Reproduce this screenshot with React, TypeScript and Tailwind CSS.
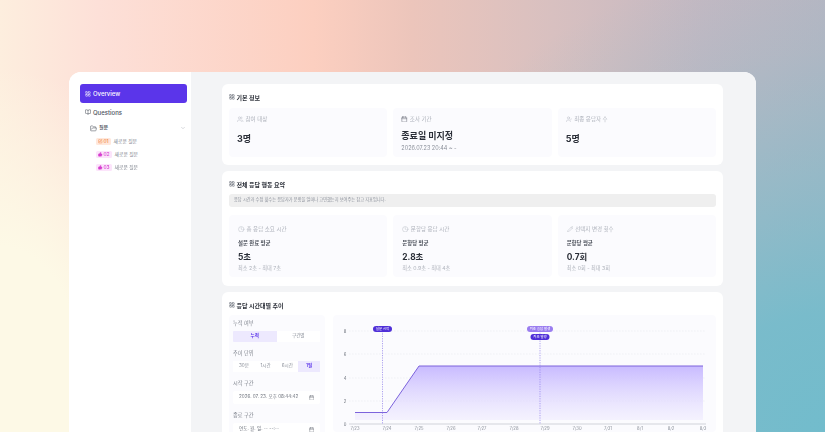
import { BookOpen, Calendar, ChevronDown, Clock, FolderOpen, LayoutGrid, Pencil, SquarePen, ThumbsUp, UserCheck, Users } from "lucide-react";
import type { ReactNode } from "react";

const font = "font-['Inter','Noto_Sans_CJK_KR',sans-serif]";

function Title({ children }: { children: ReactNode }) {
  return (
    <div className="flex h-[10px] items-center gap-[1.5px] text-[6px] font-bold text-[#2b2f38]">
      <LayoutGrid className="h-[6px] w-[6px] text-[#555b66]" strokeWidth={2} />
      {children}
    </div>
  );
}

function Label({ icon, children }: { icon: ReactNode; children: ReactNode }) {
  return (
    <div className="flex h-[8px] items-center gap-[2px] text-[5.5px] text-[#aeb2bb]">
      {icon}
      {children}
    </div>
  );
}

function Stat({ icon, label, sub, value, range }: { icon: ReactNode; label: string; sub: string; value: string; range: string }) {
  return (
    <div className="flex-1 rounded-[4px] bg-[#fbfbfe] pl-[9px] pt-[10px]">
      <Label icon={icon}>{label}</Label>
      <div className="mt-[6px] text-[5.4px] font-semibold leading-[9px] text-[#4a4f59]">{sub}</div>
      <div className="mt-[3px] text-[8.4px] font-bold leading-[13px] text-[#2b2f38]">{value}</div>
      <div className="mt-[1px] text-[5.2px] leading-[7px] text-[#aeb2bb]">{range}</div>
    </div>
  );
}

function NavQuestion({ num, orange }: { num: string; orange?: boolean }) {
  return (
    <div className="flex h-[13px] items-center gap-[3px] pl-[16px]">
      <span className={orange ? "flex h-[7px] items-center gap-[1px] rounded-[1.5px] bg-[#ffe8dc] px-[2px] text-[4.8px] font-medium text-[#f08a4b]" : "flex h-[7px] items-center gap-[1px] rounded-[1.5px] bg-[#fce4fb] px-[2px] text-[4.8px] font-medium text-[#d63fd0]"}>
        {orange ? <SquarePen className="h-[4.5px] w-[4.5px]" strokeWidth={2.5} /> : <ThumbsUp className="h-[4.5px] w-[4.5px]" fill="currentColor" strokeWidth={2} />}
        {num}
      </span>
      <span className="text-[4.8px] text-[#7d828c]">새로운 질문</span>
    </div>
  );
}

function FieldLabel({ children }: { children: ReactNode }) {
  return <div className="text-[5.2px] leading-[8px] text-[#7d828c]">{children}</div>;
}

function DateField({ value }: { value: string }) {
  return (
    <div className="mt-[4px] flex h-[13px] items-center justify-between rounded-[2px] bg-white pl-[6px] pr-[6px] text-[4.6px] text-[#6d727c]">
      <span>{value}</span>
      <Calendar className="h-[5.5px] w-[5.5px]" strokeWidth={2} />
    </div>
  );
}

function Chart() {
  const xs = [355, 387, 419, 451, 482, 514, 545, 577, 608, 640, 671, 703];
  const labels = ["7/23", "7/24", "7/25", "7/26", "7/27", "7/28", "7/29", "7/30", "7/31", "8/1", "8/2", "8/3"];
  const ys: [string, number][] = [["8", 331], ["6", 354], ["4", 378], ["2", 401], ["0", 424]];
  return (
    <svg viewBox="333 315 383 117" className="h-[117px] w-[383px]" fontSize="4.2">
      <defs>
        <linearGradient id="area" x1="0" y1="0" x2="0" y2="1">
          <stop offset="0" stopColor="#c8baff" />
          <stop offset="1" stopColor="#ede9fe" stopOpacity="0.5" />
        </linearGradient>
      </defs>
      {ys.map(([t, y]) => (
        <g key={t}>
          <line x1="349" x2="706" y1={y} y2={y} stroke={t === "0" ? "#dfe1e6" : "#eceef2"} strokeWidth={t === "0" ? 1.4 : 0.7} strokeDasharray={t === "0" ? undefined : "1.5 1.5"} />
          <text x="345" y={y + 1.5} fill="#6d727c" textAnchor="middle">{t}</text>
        </g>
      ))}
      <path d="M355 412.5H387L419 366H703V420H355Z" fill="url(#area)" />
      <path d="M355 412.5H387L419 366H703" fill="none" stroke="#7c63dc" strokeWidth="1" />
      <line x1="382.5" x2="382.5" y1="331" y2="424" stroke="#8d7bea" strokeWidth="0.7" strokeDasharray="1.2 1.2" />
      <line x1="540" x2="540" y1="331" y2="424" stroke="#8d7bea" strokeWidth="0.7" strokeDasharray="1.2 1.2" />
      <rect x="373" y="326" width="19" height="6" rx="3" fill="#4f2fd8" />
      <text x="382.5" y="330.3" fill="#fff" fontSize="3.4" textAnchor="middle">설문 시작</text>
      <rect x="527" y="326" width="26" height="6" rx="3" fill="#9a7df0" />
      <text x="540" y="330.3" fill="#fff" fontSize="3.4" textAnchor="middle">최초 응답 발생</text>
      <rect x="530.5" y="334" width="19" height="6" rx="3" fill="#4f2fd8" />
      <text x="540" y="338.3" fill="#fff" fontSize="3.4" textAnchor="middle">최초 발생</text>
      {xs.map((x, i) => (
        <text key={x} x={x} y="429.5" fill="#8b909a" textAnchor="middle">{labels[i]}</text>
      ))}
    </svg>
  );
}

export default function App() {
  const icon = "h-[6px] w-[6px]";
  return (
    <div className={`${font} h-[432px] w-[825px] overflow-hidden bg-[radial-gradient(ellipse_495px_475px_at_100%_100%,#72bccc_0%,rgba(114,188,204,0.9)_25%,rgba(114,188,204,0.55)_50%,rgba(114,188,204,0.15)_80%,rgba(114,188,204,0)_100%),radial-gradient(ellipse_200px_300px_at_0%_85%,#fdf9e6_40%,rgba(253,249,230,0)_100%),linear-gradient(90deg,#fdeede_0%,#fde0d8_12%,#fccfc0_38%,#ecc5bb_50%,#d8c0c0_67%,#c4b8c2_85%,#b8b6c2_100%)] pl-[69px] pr-[69px] pt-[72px]`}>
      <div className="flex h-[360px] overflow-hidden rounded-t-[12px] bg-white blur-[0.3px]">
        <aside className="w-[122px] shrink-0 bg-white pl-[11px] pr-[4px] pt-[12px]">
          <div className="flex h-[19px] items-center gap-[2px] rounded-[3px] bg-[#5b35ea] pl-[5px] text-[6px] font-medium text-white">
            <LayoutGrid className={icon} strokeWidth={2} />
            Overview
          </div>
          <div className="flex h-[18px] items-center gap-[2px] pl-[5px] text-[6px] font-medium text-[#4b505a]">
            <BookOpen className={icon} strokeWidth={2} />
            Questions
          </div>
          <div className="flex h-[14px] items-center justify-between pl-[10px] pr-[1px] text-[5px] font-medium text-[#4b505a]">
            <span className="flex items-center gap-[2px]">
              <FolderOpen className="h-[7px] w-[7px]" strokeWidth={1.8} />
              질문
            </span>
            <ChevronDown className="h-[6px] w-[6px] text-[#b3b7be]" strokeWidth={2} />
          </div>
          <NavQuestion num="01" orange />
          <NavQuestion num="02" />
          <NavQuestion num="03" />
        </aside>
        <main className="flex flex-1 flex-col gap-[6px] bg-[#f3f4f6] pl-[31px] pr-[34px] pt-[12px]">
          <section className="h-[81px] shrink-0 rounded-[6px] bg-white px-[7px] pt-[8px]">
            <Title>기본 정보</Title>
            <div className="mt-[6px] flex gap-[6px]">
              <div className="h-[49px] flex-1 rounded-[4px] bg-[#fbfbfe] pl-[8px] pt-[7px]">
                <Label icon={<Users className="h-[6.5px] w-[6.5px]" strokeWidth={1.5} />}>참여 대상</Label>
                <div className="mt-[9px] text-[9px] font-bold leading-[14px] text-[#2b2f38]">3명</div>
              </div>
              <div className="h-[49px] flex-1 rounded-[4px] bg-[#fbfbfe] pl-[8px] pt-[7px]">
                <Label icon={<Calendar className="h-[6.5px] w-[6.5px] text-[#6d727c]" strokeWidth={2} />}>조사 기간</Label>
                <div className="mt-[6px] text-[9px] font-bold leading-[14px] text-[#2b2f38]">종료일 미지정</div>
                <div className="mt-[1px] text-[5.5px] leading-[8px] text-[#8b909a]">2026.07.23 20:44 ~ -</div>
              </div>
              <div className="h-[49px] flex-1 rounded-[4px] bg-[#fbfbfe] pl-[8px] pt-[7px]">
                <Label icon={<UserCheck className="h-[6.5px] w-[6.5px]" strokeWidth={1.5} />}>최종 응답자 수</Label>
                <div className="mt-[9px] text-[9px] font-bold leading-[14px] text-[#2b2f38]">5명</div>
              </div>
            </div>
          </section>
          <section className="h-[115px] shrink-0 rounded-[6px] bg-white px-[7px] pt-[8px]">
            <Title>전체 응답 행동 요약</Title>
            <div className="mt-[5px] flex h-[13px] items-center rounded-[3px] bg-[#efefef] pl-[5px] text-[4.2px] text-[#8b909a]">
              응답 시간과 수정 횟수는 응답자가 문항을 얼마나 고민했는지 보여주는 참고 지표입니다.
            </div>
            <div className="mt-[8px] flex h-[62px] gap-[6px]">
              <Stat icon={<Clock className="h-[6.5px] w-[6.5px]" strokeWidth={1.5} />} label="총 응답 소요 시간" sub="설문 완료 평균" value="5초" range="최소 2초 - 최대 7초" />
              <Stat icon={<Clock className="h-[6.5px] w-[6.5px]" strokeWidth={1.5} />} label="문항당 응답 시간" sub="문항당 평균" value="2.8초" range="최소 0.9초 - 최대 4초" />
              <Stat icon={<Pencil className="h-[6.5px] w-[6.5px]" strokeWidth={1.5} />} label="선택지 변경 횟수" sub="문항당 평균" value="0.7회" range="최소 0회 - 최대 3회" />
            </div>
          </section>
          <section className="min-h-0 flex-1 rounded-t-[6px] bg-white px-[7px] pt-[8px]">
            <Title>응답 시간대별 추이</Title>
            <div className="mt-[5px] flex gap-[8px]">
              <div className="h-[140px] w-[96px] shrink-0 rounded-[4px] bg-[#fbfbfe] pl-[4px] pr-[5px] pt-[4px]">
                <FieldLabel>누적 여부</FieldLabel>
                <div className="mt-[4px] flex h-[11px] text-[4.6px]">
                  <div className="flex flex-1 items-center justify-center rounded-l-[1px] bg-[#ede9fe] font-semibold text-[#5b35ea]">누적</div>
                  <div className="flex flex-1 items-center justify-center bg-white text-[#8b909a]">구간별</div>
                </div>
                <div className="mt-[7px]"><FieldLabel>추이 단위</FieldLabel></div>
                <div className="mt-[4px] flex h-[11px] text-[4.6px] text-[#8b909a]">
                  <div className="flex flex-1 items-center justify-center bg-white">30분</div>
                  <div className="flex flex-1 items-center justify-center bg-white">1시간</div>
                  <div className="flex flex-1 items-center justify-center bg-white">6시간</div>
                  <div className="flex flex-1 items-center justify-center bg-[#ede9fe] font-semibold text-[#5b35ea]">1일</div>
                </div>
                <div className="mt-[7px]"><FieldLabel>시작 구간</FieldLabel></div>
                <DateField value="2026. 07. 23. 오후 08:44:42" />
                <div className="mt-[7px]"><FieldLabel>종료 구간</FieldLabel></div>
                <DateField value="연도. 월. 일. -- --:--" />
              </div>
              <div className="h-[117px] min-w-0 flex-1 rounded-[4px] bg-[#fbfbfe]">
                <Chart />
              </div>
            </div>
          </section>
        </main>
      </div>
    </div>
  );
}
